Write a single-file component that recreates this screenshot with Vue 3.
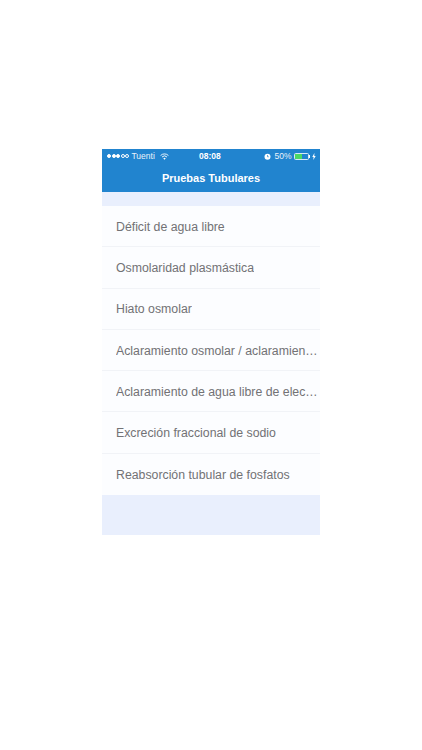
<script setup>
const items = [
  'Déficit de agua libre',
  'Osmolaridad plasmástica',
  'Hiato osmolar',
  'Aclaramiento osmolar / aclaramiento de creatinina',
  'Aclaramiento de agua libre de electrolitos',
  'Excreción fraccional de sodio',
  'Reabsorción tubular de fosfatos'
]
</script>

<template>
  <div class="page">
    <div class="phone">
      <header class="header">
        <div class="status">
          <div class="status__left">
            <span class="dot dot--on"></span>
            <span class="dot dot--on"></span>
            <span class="dot dot--on"></span>
            <span class="dot"></span>
            <span class="dot"></span>
            <span class="carrier">Tuenti</span>
            <svg class="wifi" width="9" height="7" viewBox="0 0 9 7" fill="none" stroke="#fff">
              <path d="M.6 2.5a5.6 5.6 0 0 1 7.8 0" stroke-width=".9" />
              <path d="M2 4a3.6 3.6 0 0 1 5 0" stroke-width=".9" />
              <path d="M4.5 6.8 3.3 5.4a1.7 1.7 0 0 1 2.4 0z" fill="#fff" stroke="none" />
            </svg>
          </div>
          <span class="status__time">08:08</span>
          <div class="status__right">
            <svg class="alarm" width="7" height="7" viewBox="0 0 7 7">
              <circle cx="3.5" cy="3.7" r="3" fill="#fff" />
              <path d="M3.5 2v1.8h1.3" fill="none" stroke="#2184cf" stroke-width=".7" />
            </svg>
            <span class="percent">50%</span>
            <span class="battery"><span class="battery__fill"></span></span>
            <span class="battery__tip"></span>
            <svg class="bolt" width="4" height="7" viewBox="0 0 4 7">
              <path d="M2.4 0 .3 3.9h1.3L1.3 7l2.4-4H2.3z" fill="#fff" />
            </svg>
          </div>
        </div>
        <h1 class="title">Pruebas Tubulares</h1>
      </header>

      <ul class="list">
        <li v-for="item in items" :key="item" class="list__item">
          <span class="list__text">{{ item }}</span>
        </li>
      </ul>
    </div>
  </div>
</template>

<style>
html,
body {
  background: #fff;
}
</style>

<style scoped>
.page {
  height: 750px;
  padding-top: 149px;
  box-sizing: border-box;
  font-family: "Liberation Sans", Arial, sans-serif;
}

.phone {
  width: 218px;
  height: 385.5px;
  margin-left: 102px;
  background: #e9effd;
}

.header {
  height: 43px;
  background: #2184cf;
  color: #fff;
}

.status {
  display: flex;
  align-items: center;
  justify-content: space-between;
  height: 14px;
  padding: 0 4px 0 5px;
  font-size: 8.5px;
  position: relative;
}

.status__left,
.status__right {
  display: flex;
  align-items: center;
}

.status__time {
  position: absolute;
  left: 97px;
  font-weight: 700;
}

.dot {
  width: 4px;
  height: 4px;
  margin-right: 0.6px;
  border: 0.6px solid #fff;
  border-radius: 50%;
  box-sizing: border-box;
}

.dot--on {
  background: #fff;
}

.carrier {
  margin-left: 1.5px;
  opacity: 0.9;
}

.wifi {
  margin-left: 5px;
}

.percent {
  margin-left: 3px;
  opacity: 0.9;
}

.battery {
  display: block;
  width: 15px;
  height: 7px;
  margin-left: 2px;
  border: 0.5px solid #d5e8f7;
  border-radius: 1.5px;
  box-sizing: border-box;
}

.battery__fill {
  display: block;
  width: 58%;
  height: 100%;
  background: #4cd964;
}

.battery__tip {
  width: 1px;
  height: 3px;
  margin-left: 0.5px;
  background: #fff;
}

.bolt {
  margin-left: 2px;
}

.title {
  margin: 0;
  height: 29px;
  font-size: 11px;
  font-weight: 700;
  line-height: 30px;
  text-align: center;
}

.list {
  margin: 0;
  padding: 14px 0 0;
  list-style: none;
}

.list__item {
  height: 41.3px;
  padding: 1px 2px 0 14px;
  box-sizing: border-box;
  display: flex;
  align-items: center;
  background: #fcfdff;
  border-bottom: 0.6px solid #f1f3f7;
  color: #727275;
  font-size: 12.3px;
}

.list__item:last-child {
  border-bottom: none;
}

.list__text {
  overflow: hidden;
  white-space: nowrap;
  text-overflow: ellipsis;
}
</style>
